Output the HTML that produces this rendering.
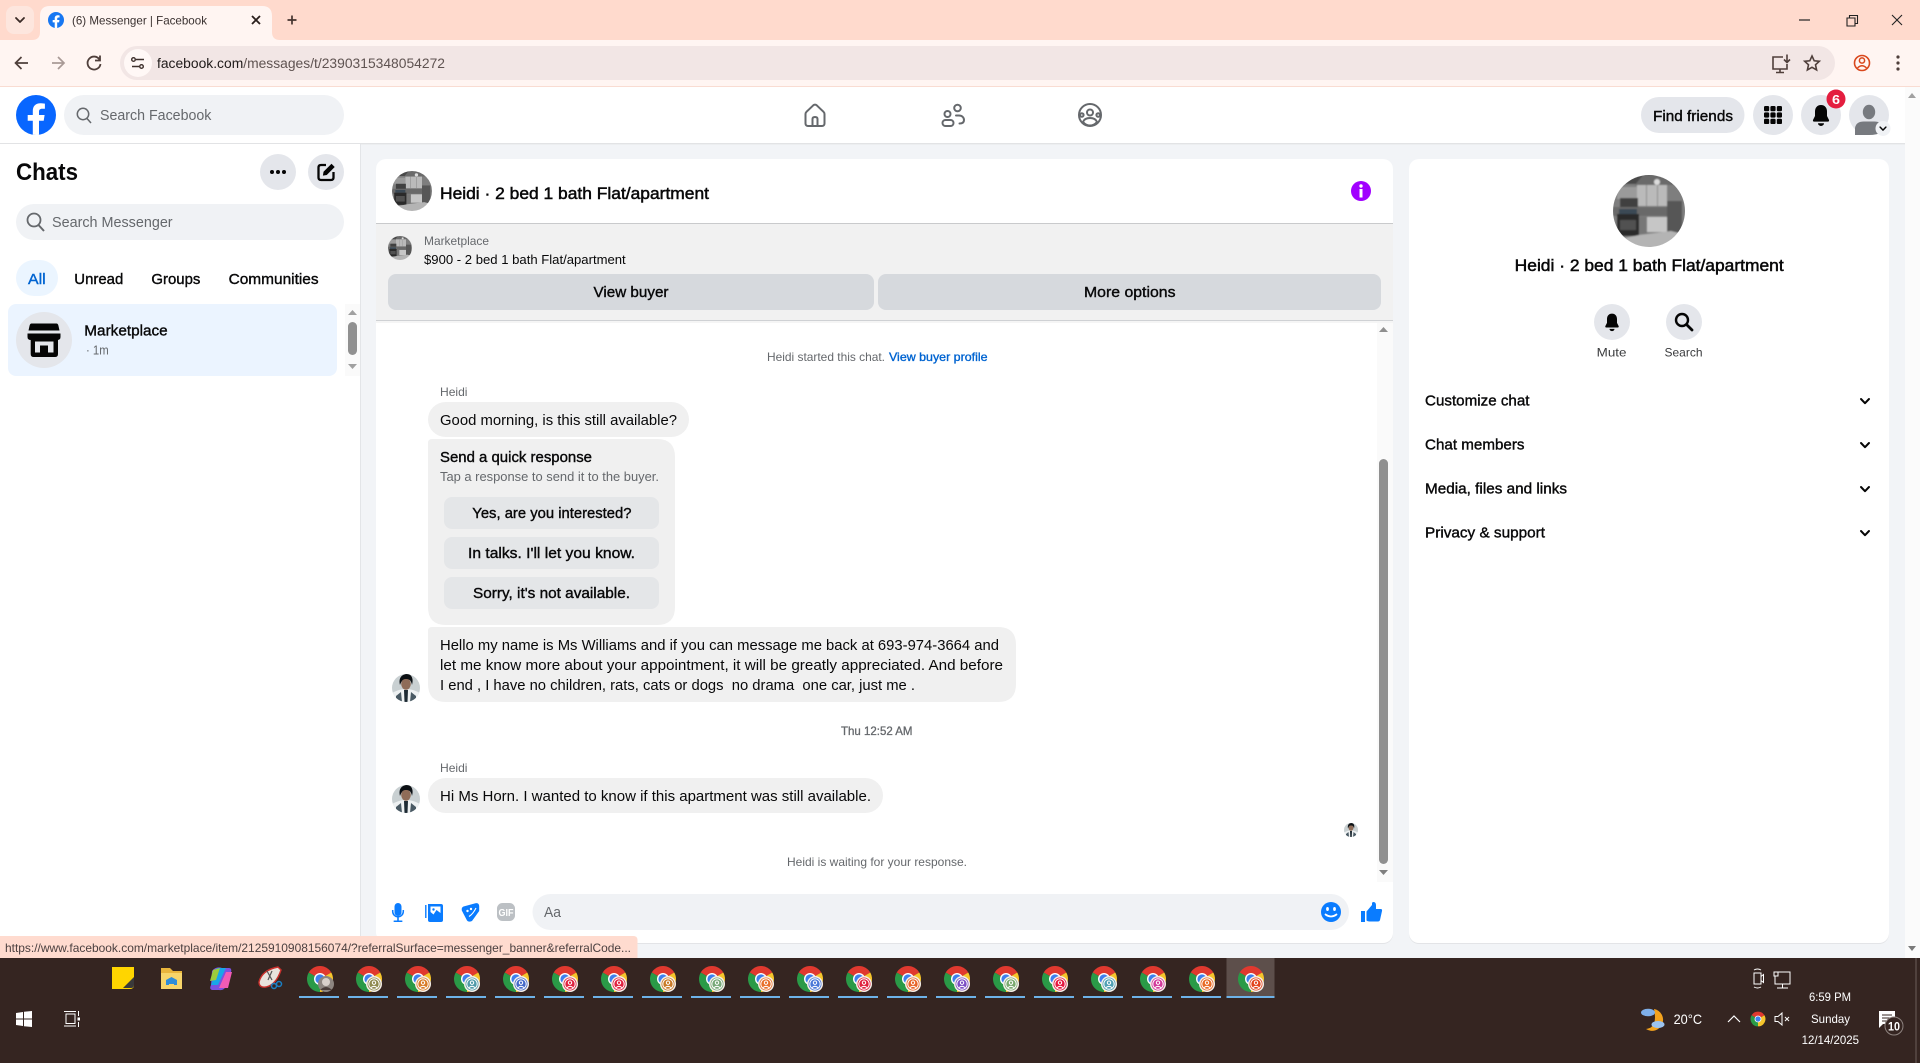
<!DOCTYPE html>
<html lang="en"><head><meta charset="utf-8"><title>(6) Messenger | Facebook</title>
<style>
html,body{margin:0;padding:0;width:1920px;height:1063px;overflow:hidden;background:#f2f4f7}
svg{display:block}
text{font-family:"Liberation Sans",sans-serif;white-space:pre;fill:#080809;font-size:15px}
.m{stroke:#080809;stroke-width:.38px}
.g{fill:#65686c}
.w{fill:#fff}
.s12{font-size:12px}.s13{font-size:13px}
.ic{fill:none;stroke:#65686c;stroke-width:2;stroke-linecap:round;stroke-linejoin:round}
</style></head><body>
<svg width="1920" height="1063" viewBox="0 0 1920 1063" xmlns="http://www.w3.org/2000/svg">
<defs>
<clipPath id="c72"><circle cx="36" cy="36" r="36"/></clipPath>
<filter id="soft" x="-5%" y="-5%" width="110%" height="110%"><feGaussianBlur stdDeviation=".7"/></filter>
<symbol id="kitchen" viewBox="0 0 72 72"><g clip-path="url(#c72)"><g filter="url(#soft)">
<rect x="-2" y="-2" width="76" height="76" fill="#7e7e7e"/>
<rect x="-2" y="-2" width="76" height="11" fill="#4a4a4a"/>
<polygon points="30,0 52,0 60,10 22,10" fill="#6b6b6b"/>
<circle cx="44" cy="7" r="3" fill="#dcdcdc"/>
<rect x="24" y="10" width="30" height="21" fill="#bababa"/>
<rect x="33" y="10" width="1" height="21" fill="#8c8c8c"/><rect x="44" y="10" width="1" height="21" fill="#8c8c8c"/>
<rect x="4" y="12" width="20" height="12" fill="#9b9b9b"/>
<rect x="7" y="23" width="18" height="10" fill="#404040"/>
<rect x="0" y="32" width="56" height="9" fill="#696969"/>
<rect x="6" y="34" width="18" height="5" fill="#3a4854"/>
<rect x="4" y="39" width="22" height="22" fill="#2a2a2a"/>
<rect x="7" y="45" width="16" height="10" fill="#515151"/>
<rect x="26" y="42" width="8" height="17" fill="#777"/>
<rect x="34" y="42" width="20" height="15" fill="#c6c6c6"/>
<rect x="54" y="26" width="15" height="32" fill="#565656"/>
<polygon points="-2,66 26,60 58,56 74,60 74,74 -2,74" fill="#b4b4b4"/>
</g></g></symbol>
<clipPath id="c28"><circle cx="14" cy="14" r="14"/></clipPath>
<symbol id="person" viewBox="0 0 28 28"><g clip-path="url(#c28)">
<rect width="28" height="28" fill="#c9d0d2"/>
<path d="M0 28V19C4 17 8 15 14 15S24 17 28 19V28Z" fill="#eef1f2"/>
<path d="M12 16H16L15.500 28H12.500Z" fill="#1d2a33"/>
<path d="M4 28V22L9 18 10 28ZM24 28V22L19 18 18 28Z" fill="#4a5a64"/>
<ellipse cx="14" cy="10" rx="4.800" ry="5.800" fill="#8f6c58"/>
<path d="M8 11C6 3 11 0 15 0S22 4 20 11C19 6 17 5 14 5S10 6 8 11Z" fill="#0c1014"/>
</g></symbol>
<symbol id="fbf" viewBox="0 0 40 40"><path d="M27.7 25.8L28.6 20H23V16.6C23 14.9 23.9 13.7 26.2 13.7H28.9V8.6S26.6 8.2 24.4 8.2C19.8 8.2 16.8 11 16.8 15.7V20H11.7V25.8H16.8V39.6C18 39.9 19 40 20 40S22 39.9 23 39.7V25.8Z" fill="#fff"/></symbol>
<symbol id="chrome" viewBox="-14 -14 28 28" overflow="visible">
<path d="M0 0L-11.26-6.5A13 13 0 0 1 11.26-6.5Z" fill="#e0392f"/>
<path d="M0 0L11.26-6.5A13 13 0 0 1 0 13Z" fill="#f6c52c"/>
<path d="M0 0L0 13A13 13 0 0 1-11.26-6.5Z" fill="#2a9a47"/>
<circle r="6" fill="#fff"/><circle r="4.6" fill="#3f80ee"/>
</symbol>
<symbol id="badge" viewBox="-9 -9 18 18">
<circle r="8" fill="#f6efe8"/><circle r="6.5" fill="currentColor"/><circle r="5.2" fill="none" stroke="#fff" stroke-width="1"/>
<circle cy="-1.3" r="1.7" fill="none" stroke="#fff" stroke-width="1"/><path d="M-3 3.6Q0 1 3 3.6" fill="none" stroke="#fff" stroke-width="1"/>
</symbol>
<symbol id="bell" viewBox="0 0 24 24"><path d="M12 2C8 2 6 5 6 8.5V13L4 17C3.7 18 4.2 18.6 5 18.6H19C19.8 18.6 20.3 18 20 17L18 13V8.5C18 5 16 2 12 2ZM9 20.2A3 2.8 0 0 0 15 20.2Z" fill="#050505"/></symbol>
<symbol id="chev" viewBox="0 0 14 14"><path d="M3 5L7 9.2 11 5" fill="none" stroke="#050505" stroke-width="2" stroke-linecap="round" stroke-linejoin="round"/></symbol>
</defs>

<!-- browser chrome -->
<rect width="1920" height="87" fill="#ffdacd"/>
<rect x="6" y="6" width="28" height="28" rx="8" fill="#fde6de"/>
<path d="M16 18L20 22 24 18" fill="none" stroke="#3a2a26" stroke-width="1.8" stroke-linecap="round" stroke-linejoin="round"/>
<path d="M0 40H1920V86H0Z" fill="#fff5f2"/>
<path d="M32 40Q40 40 40 32V16Q40 6 50 6H262Q272 6 272 16V32Q272 40 280 40Z" fill="#fff5f2"/>
<circle cx="56" cy="20" r="8" fill="#1877f2"/><use href="#fbf" x="48" y="12" width="16" height="16"/>
<text x="72" y="24.5" class="s12" style="fill:#3a3130" textLength="135" lengthAdjust="spacingAndGlyphs">(6) Messenger | Facebook</text>
<path d="M252 16L260 24M260 16L252 24" stroke="#2a1f1c" stroke-width="1.8"/>
<path d="M292 15.5V24.5M287.5 20H296.5" stroke="#45342f" stroke-width="1.7"/>
<path d="M1799 20H1810" stroke="#222" stroke-width="1.2"/>
<path d="M1847 18H1855V26H1847ZM1849.5 18V15.5H1857.5V23.5H1855" fill="none" stroke="#222" stroke-width="1.1"/>
<path d="M1892 15L1902 25M1902 15L1892 25" stroke="#222" stroke-width="1.1"/>
<rect x="0" y="86" width="1920" height="1" fill="#f9dcd2"/>
<path d="M15.5 63H28M21.5 57L15.5 63 21.5 69" fill="none" stroke="#4f3f3b" stroke-width="1.7"/>
<path d="M64 63H52M58 57L64 63 58 69" fill="none" stroke="#a99a96" stroke-width="1.7"/>
<path d="M99.5 59.5A6.5 6.5 0 1 0 100.5 64M100 55.5V60.5H95" fill="none" stroke="#4f3f3b" stroke-width="1.8"/>
<rect x="120" y="46" width="1715" height="34" rx="17" fill="#f2e6e5"/>
<circle cx="138" cy="63" r="14" fill="#fff8f6"/>
<path d="M136 59.5H144M132 66.5H139" stroke="#3e302c" stroke-width="1.5"/><circle cx="133.5" cy="59.5" r="1.8" fill="none" stroke="#3e302c" stroke-width="1.4"/><circle cx="141.5" cy="66.5" r="1.8" fill="none" stroke="#3e302c" stroke-width="1.4"/>
<text x="157" y="68" style="font-size:13.5px;fill:#5f5351" textLength="288" lengthAdjust="spacingAndGlyphs"><tspan style="fill:#1f1a19">facebook.com</tspan>/messages/t/2390315348054272</text>
<path d="M1783 57H1773V69H1787V64M1776 72.5H1784M1780 69V72M1787 54.5V62M1784 59.5L1787 62.5 1790 59.5" fill="none" stroke="#4f3f3b" stroke-width="1.6"/>
<path d="M1812 56L1814.2 60.8 1819.3 61.3 1815.5 64.8 1816.6 69.9 1812 67.3 1807.4 69.9 1808.5 64.8 1804.7 61.3 1809.8 60.8Z" fill="none" stroke="#4f3f3b" stroke-width="1.6"/>
<circle cx="1862" cy="63" r="7.5" fill="none" stroke="#d9471c" stroke-width="1.6"/><circle cx="1862" cy="60.5" r="2.6" fill="none" stroke="#d9471c" stroke-width="1.5"/><path d="M1857.5 68Q1862 63.5 1866.5 68" fill="none" stroke="#d9471c" stroke-width="1.5"/>
<circle cx="1898" cy="57" r="1.6" fill="#4f3f3b"/><circle cx="1898" cy="63" r="1.6" fill="#4f3f3b"/><circle cx="1898" cy="69" r="1.6" fill="#4f3f3b"/>

<!-- page -->
<rect x="0" y="87" width="1920" height="871" fill="#f2f4f7"/>
<rect x="1905" y="87" width="15" height="871" fill="#fbfbfb"/>
<path d="M1912 93L1916 98H1908Z" fill="#a0a0a0"/><path d="M1912 951L1908 946H1916Z" fill="#7a7a7a"/>

<!-- header -->
<rect x="0" y="87" width="1905" height="56" fill="#fff"/>
<rect x="0" y="143" width="1905" height="1" fill="#e2e3e5"/><rect x="0" y="144" width="1905" height="1" fill="#eceef0"/>
<circle cx="36" cy="115" r="20" fill="#0866ff"/><use href="#fbf" x="16" y="95" width="40" height="40"/>
<rect x="64" y="95" width="280" height="40" rx="20" fill="#f0f2f5"/>
<circle cx="83" cy="114" r="5.7" fill="none" stroke="#65686c" stroke-width="1.5"/><path d="M87 118.5L91 123" stroke="#65686c" stroke-width="1.5"/>
<text x="100" y="120" class="g" textLength="111.4" lengthAdjust="spacingAndGlyphs">Search Facebook</text>
<g transform="translate(803 103)" class="ic"><path d="M2.5 11C2.5 10 3 9.3 3.6 8.7L10.3 2.3C11.3 1.4 12.7 1.4 13.7 2.3L20.4 8.7C21 9.3 21.5 10 21.5 11V20.5C21.5 22 20.5 23 19 23H5C3.5 23 2.5 22 2.5 20.5ZM9.5 23V16C9.5 15 10.2 14 12 14S14.5 15 14.5 16V23"/></g>
<g transform="translate(941 103)" class="ic"><circle cx="6.5" cy="11" r="3"/><rect x="1.5" y="17" width="11" height="6" rx="3"/><circle cx="16.5" cy="5" r="3.3"/><path d="M15 12.5H18C21 12.5 23 14.5 23 17S21 20.5 18.5 20.5"/></g>
<g transform="translate(1078 103)" class="ic"><circle cx="12" cy="12" r="11"/><circle cx="12" cy="9.5" r="3"/><circle cx="3.8" cy="12" r="1.8"/><circle cx="20.2" cy="12" r="1.8"/><path d="M5 19Q6.5 15 12 15T19 19Q16 22.5 12 22.5T5 19Z"/></g>
<rect x="1641" y="97" width="103.500" height="36" rx="18" fill="#e4e6eb"/>
<text x="1653" y="121" class="m" textLength="80" lengthAdjust="spacingAndGlyphs">Find friends</text>
<circle cx="1773" cy="115" r="20" fill="#e4e6eb"/>
<g fill="#050505"><rect x="1764" y="106" width="5.200" height="5.200" rx="1.300"/><rect x="1770.400" y="106" width="5.200" height="5.200" rx="1.300"/><rect x="1776.800" y="106" width="5.200" height="5.200" rx="1.300"/><rect x="1764" y="112.400" width="5.200" height="5.200" rx="1.300"/><rect x="1770.400" y="112.400" width="5.200" height="5.200" rx="1.300"/><rect x="1776.800" y="112.400" width="5.200" height="5.200" rx="1.300"/><rect x="1764" y="118.800" width="5.200" height="5.200" rx="1.300"/><rect x="1770.400" y="118.800" width="5.200" height="5.200" rx="1.300"/><rect x="1776.800" y="118.800" width="5.200" height="5.200" rx="1.300"/></g>
<circle cx="1821" cy="115" r="20" fill="#e4e6eb"/><use href="#bell" x="1809" y="103" width="24" height="24"/>
<circle cx="1836" cy="99" r="9.500" fill="#e41e3f"/><text x="1832" y="104" class="w" style="font-size:13px;font-weight:bold" textLength="8" lengthAdjust="spacingAndGlyphs">6</text>
<circle cx="1869" cy="115" r="20" fill="#e4e6eb"/>
<ellipse cx="1869" cy="112" rx="6.200" ry="7.200" fill="#777a7f"/><path d="M1855 135V128Q1856 121.500 1864 121.500H1874Q1882 121.500 1883 128V132Q1877 135 1869 135Z" fill="#777a7f"/>
<circle cx="1883" cy="128.500" r="7.500" fill="#f0f2f5"/><use href="#chev" x="1878" y="123.500" width="10" height="10"/>

<!-- sidebar -->
<rect x="0" y="144" width="360" height="814" fill="#fff"/><rect x="360" y="144" width="1" height="814" fill="#e3e5e8"/>
<text x="16" y="180" style="font-size:24px;font-weight:bold" textLength="62" lengthAdjust="spacingAndGlyphs">Chats</text>
<circle cx="278" cy="172" r="18" fill="#e4e6eb"/><circle cx="272" cy="172" r="2" fill="#050505"/><circle cx="278" cy="172" r="2" fill="#050505"/><circle cx="284" cy="172" r="2" fill="#050505"/>
<circle cx="326" cy="172" r="18" fill="#e4e6eb"/>
<path d="M326 165H321Q318.500 165 318.500 167.500V177.500Q318.500 180 321 180H331Q333.500 180 333.500 177.500V172" fill="none" stroke="#050505" stroke-width="2.300"/><path d="M324 172L331.500 164.500 334 167 326.500 174.500 323.500 175Z" fill="#050505" stroke="#050505" stroke-width="1"/>
<rect x="16" y="204" width="328" height="36" rx="18" fill="#f0f2f5"/>
<circle cx="34" cy="220" r="6.500" fill="none" stroke="#65686c" stroke-width="1.800"/><path d="M38.500 225L44 231" stroke="#65686c" stroke-width="2"/>
<text x="52" y="227" class="g" textLength="120.600" lengthAdjust="spacingAndGlyphs">Search Messenger</text>
<rect x="16" y="260" width="42" height="36" rx="18" fill="#ebf5ff"/>
<text x="28" y="284" style="fill:#0064d1;stroke:#0064d1;stroke-width:.38px" textLength="17.700" lengthAdjust="spacingAndGlyphs">All</text>
<text x="74.300" y="284" class="m" textLength="49" lengthAdjust="spacingAndGlyphs">Unread</text>
<text x="151.400" y="284" class="m" textLength="49" lengthAdjust="spacingAndGlyphs">Groups</text>
<text x="228.600" y="284" class="m" textLength="90" lengthAdjust="spacingAndGlyphs">Communities</text>
<rect x="8" y="304" width="329" height="72" rx="8" fill="#ebf4ff"/>
<circle cx="44" cy="340" r="28" fill="#e4e6eb"/>
<path d="M31.500 323.500H56.500Q58 323.500 58.500 326L59.500 330.500H28.500L29.500 326Q30 323.500 31.500 323.500Z" fill="#050505"/>
<path d="M27.500 333.500H60.500V337Q60.500 340 57 340H31Q27.500 340 27.500 337Z" fill="#050505"/>
<path d="M30.700 339H58V354Q58 357 55 357H33.700Q30.700 357 30.700 354ZM35 341.500V352.500H40V345.500H48V352.500H53.500V341.500Z" fill="#050505" fill-rule="evenodd"/>
<text x="84.300" y="335.500" class="m" textLength="83.400" lengthAdjust="spacingAndGlyphs">Marketplace</text>
<text x="86" y="354.500" class="g s13" textLength="22.700" lengthAdjust="spacingAndGlyphs">· 1m</text>
<rect x="345" y="304" width="15" height="72" fill="#fafafa"/>
<rect x="348" y="322" width="9" height="33" rx="4.500" fill="#909090"/>
<path d="M352.500 310L357 315H348Z" fill="#a0a0a0"/><path d="M352.500 369L348 364H357Z" fill="#a0a0a0"/>

<!-- chat panel -->
<rect x="376" y="160" width="1017" height="784" rx="10" fill="#e3e4e7"/>
<rect x="376" y="159" width="1017" height="784" rx="10" fill="#fff"/>
<use href="#kitchen" x="392" y="171" width="40" height="40"/>
<text x="440" y="199" style="font-size:17px;stroke:#080809;stroke-width:.5px" textLength="269" lengthAdjust="spacingAndGlyphs">Heidi · 2 bed 1 bath Flat/apartment</text>
<circle cx="1361" cy="191" r="10" fill="#a100ff"/><circle cx="1361" cy="186" r="1.700" fill="#fff"/><rect x="1359.500" y="189" width="3" height="8.500" fill="#fff"/>
<rect x="376" y="223" width="1017" height="1" fill="#c9cacc"/>
<rect x="376" y="224" width="1017" height="96" fill="#f1f1f1"/>
<rect x="376" y="320" width="1017" height="1" fill="#cfd1d4"/><rect x="376" y="321" width="1017" height="2" fill="#f5f5f5"/>
<use href="#kitchen" x="388" y="236" width="24" height="24"/>
<text x="424" y="245" class="g s12" textLength="65" lengthAdjust="spacingAndGlyphs">Marketplace</text>
<text x="424" y="264" class="s13" textLength="201.700" lengthAdjust="spacingAndGlyphs">$900 - 2 bed 1 bath Flat/apartment</text>
<rect x="388" y="274" width="486" height="36" rx="8" fill="#d6d9dd"/>
<rect x="878" y="274" width="503" height="36" rx="8" fill="#d6d9dd"/>
<text x="593.500" y="297" class="m" textLength="75" lengthAdjust="spacingAndGlyphs">View buyer</text>
<text x="1084" y="297" class="m" textLength="91.500" lengthAdjust="spacingAndGlyphs">More options</text>

<rect x="1377" y="323" width="16" height="559" fill="#fafafa"/>
<path d="M1383.500 327L1388 332H1379Z" fill="#8f8f8f"/><path d="M1383.500 875L1379 870H1388Z" fill="#7f7f7f"/>
<rect x="1379" y="459" width="9" height="405" rx="4.500" fill="#909090"/>

<text x="767" y="361" class="g s12" textLength="118" lengthAdjust="spacingAndGlyphs">Heidi started this chat.</text>
<text x="889" y="361" class="s12" style="fill:#0064d1;stroke:#0064d1;stroke-width:.35px" textLength="98.500" lengthAdjust="spacingAndGlyphs">View buyer profile</text>
<text x="440" y="396" class="g s12" textLength="27.500" lengthAdjust="spacingAndGlyphs">Heidi</text>
<rect x="428" y="402" width="261" height="35" rx="17.500" fill="#f0f0f0"/>
<text x="440" y="425" textLength="237" lengthAdjust="spacingAndGlyphs">Good morning, is this still available?</text>
<path d="M432 439H657Q675 439 675 457V607Q675 625 657 625H446Q428 625 428 607V443Q428 439 432 439Z" fill="#f0f0f0"/>
<text x="440" y="462" class="m" textLength="152" lengthAdjust="spacingAndGlyphs">Send a quick response</text>
<text x="440" y="481" class="g s13" textLength="219" lengthAdjust="spacingAndGlyphs">Tap a response to send it to the buyer.</text>
<rect x="444" y="497" width="215" height="32" rx="8" fill="#e4e6e8"/>
<rect x="444" y="537" width="215" height="32" rx="8" fill="#e4e6e8"/>
<rect x="444" y="577" width="215" height="32" rx="8" fill="#e4e6e8"/>
<text x="472.300" y="518" class="m" textLength="159.200" lengthAdjust="spacingAndGlyphs">Yes, are you interested?</text>
<text x="468" y="558" class="m" textLength="167" lengthAdjust="spacingAndGlyphs">In talks. I'll let you know.</text>
<text x="473" y="598" class="m" textLength="157" lengthAdjust="spacingAndGlyphs">Sorry, it's not available.</text>
<path d="M432 627H998Q1016 627 1016 645V684Q1016 702 998 702H446Q428 702 428 684V631Q428 627 432 627Z" fill="#f0f0f0"/>
<text x="440" y="650" textLength="559" lengthAdjust="spacingAndGlyphs">Hello my name is Ms Williams and if you can message me back at 693-974-3664 and</text>
<text x="440" y="670" textLength="563" lengthAdjust="spacingAndGlyphs">let me know more about your appointment, it will be greatly appreciated. And before</text>
<text x="440" y="690" textLength="475" lengthAdjust="spacingAndGlyphs">I end , I have no children, rats, cats or dogs  no drama  one car, just me .</text>
<use href="#person" x="392" y="674" width="28" height="28"/>
<text x="841" y="735" class="g s12" style="stroke:#65686c;stroke-width:.3px" textLength="71.500" lengthAdjust="spacingAndGlyphs">Thu 12:52 AM</text>
<text x="440" y="772" class="g s12" textLength="27.500" lengthAdjust="spacingAndGlyphs">Heidi</text>
<rect x="428" y="778" width="455" height="35" rx="17.500" fill="#f0f0f0"/>
<text x="440" y="801" textLength="431" lengthAdjust="spacingAndGlyphs">Hi Ms Horn. I wanted to know if this apartment was still available.</text>
<use href="#person" x="392" y="785" width="28" height="28"/>
<use href="#person" x="1344" y="823" width="14" height="14"/>
<text x="787" y="866" class="g s12" textLength="180" lengthAdjust="spacingAndGlyphs">Heidi is waiting for your response.</text>

<!-- composer -->
<g fill="#0a7cff">
<rect x="394.500" y="903" width="7" height="13" rx="3.500"/>
<path d="M392.700 910V911.500A5.300 5.300 0 0 0 403.300 911.500V910" fill="none" stroke="#0a7cff" stroke-width="1.500"/>
<rect x="397.200" y="917" width="1.600" height="4"/><rect x="393.500" y="920.500" width="9" height="1.500" rx=".7"/>
<path d="M428 904H441Q443 904 443 906V920Q443 922 441 922H430Q428 922 428 920Z"/>
<path d="M425.800 905V918" stroke="#0a7cff" stroke-width="1.400"/>
<path d="M430.500 906.500H440.500V913L436.500 910 433.500 914.500 430.500 912Z" fill="#fff"/><circle cx="433.500" cy="909.500" r="1.200" fill="#0a7cff"/>
<path d="M463.500 906.500L475.500 903.200Q479 902.800 479.200 906V911L472 921Q468.500 922.500 467 920.500L461.800 910.500Q461.200 907.500 463.500 906.500Z"/>
<circle cx="467.500" cy="911" r="1.200" fill="#fff"/><circle cx="471" cy="909" r="1.200" fill="#fff"/><path d="M469 916.500Q473 914 476 908" fill="none" stroke="#fff" stroke-width="1.100"/>
</g>
<rect x="497" y="903" width="18" height="18" rx="5.500" fill="#bcc0c4"/>
<text x="498.500" y="916" class="w" style="font-size:10px;font-weight:bold" textLength="15" lengthAdjust="spacingAndGlyphs">GIF</text>
<rect x="532.500" y="894" width="816.500" height="36" rx="18" fill="#f0f2f5"/>
<text x="544" y="917" style="fill:#65686c" textLength="17" lengthAdjust="spacingAndGlyphs">Aa</text>
<circle cx="1331" cy="912" r="10" fill="#0a7cff"/>
<ellipse cx="1327.500" cy="909" rx="1.400" ry="2" fill="#fff"/><ellipse cx="1334.500" cy="909" rx="1.400" ry="2" fill="#fff"/>
<path d="M1325.500 914.500Q1331 918.500 1336.500 914.500" fill="none" stroke="#fff" stroke-width="1.800" stroke-linecap="round"/>
<path d="M1361 911H1365V922H1361ZM1366.500 911.500L1372 905V903.500Q1372 902 1373.500 902Q1376 902 1376 905.500V909H1380.500Q1382.500 909 1382 911L1380 920Q1379.500 921.500 1378 921.500H1369.500Q1367.500 921.500 1366.500 920.500Z" fill="#0a7cff"/>

<!-- right panel -->
<rect x="1409" y="160" width="480" height="784" rx="10" fill="#e3e4e7"/>
<rect x="1409" y="159" width="480" height="784" rx="10" fill="#fff"/>
<use href="#kitchen" x="1613" y="175" width="72" height="72"/>
<text x="1514.700" y="271" style="font-size:17px;stroke:#080809;stroke-width:.5px" textLength="269" lengthAdjust="spacingAndGlyphs">Heidi · 2 bed 1 bath Flat/apartment</text>
<circle cx="1612" cy="322" r="18" fill="#e4e6eb"/><use href="#bell" x="1602" y="312" width="20" height="20"/>
<circle cx="1684" cy="322" r="18" fill="#e4e6eb"/><circle cx="1682" cy="320" r="6" fill="none" stroke="#050505" stroke-width="2.400"/><path d="M1686.500 324.500L1692 330" stroke="#050505" stroke-width="2.800" stroke-linecap="round"/>
<text x="1596.700" y="356.500" class="s12" style="fill:#3a3b3d" textLength="29.800" lengthAdjust="spacingAndGlyphs">Mute</text>
<text x="1664.500" y="356.500" class="s12" style="fill:#3a3b3d" textLength="38" lengthAdjust="spacingAndGlyphs">Search</text>
<text x="1425" y="405.500" class="m" textLength="104.500" lengthAdjust="spacingAndGlyphs">Customize chat</text>
<text x="1425" y="449.500" class="m" textLength="99.500" lengthAdjust="spacingAndGlyphs">Chat members</text>
<text x="1425" y="493.500" class="m" textLength="142" lengthAdjust="spacingAndGlyphs">Media, files and links</text>
<text x="1425" y="537.500" class="m" textLength="120" lengthAdjust="spacingAndGlyphs">Privacy &amp; support</text>
<use href="#chev" x="1858" y="394" width="14" height="14"/>
<use href="#chev" x="1858" y="438" width="14" height="14"/>
<use href="#chev" x="1858" y="482" width="14" height="14"/>
<use href="#chev" x="1858" y="526" width="14" height="14"/>

<!-- status bubble -->
<path d="M0 936H633Q637.500 936 637.500 940V958H0Z" fill="#ffdbcf"/>
<text x="5" y="952" class="s12" style="fill:#4b4040" textLength="626" lengthAdjust="spacingAndGlyphs">https://www.facebook.com/marketplace/item/2125910908156074/?referralSurface=messenger_banner&amp;referralCode...</text>

<!-- taskbar -->
<rect x="0" y="958" width="1920" height="105" fill="#352521"/>
<rect x="1226.500" y="958" width="48" height="38" fill="#5d4f4b"/>
<rect x="1915.500" y="958" width="1" height="105" fill="#6a5d59"/>
<path d="M112 967H134V985Q134 989 130 989H112Z" fill="#ffd500"/><path d="M123 988L134 977V985Q134 988 131 988Z" fill="#3a3a3a"/>
<path d="M161 968H170L173 971H182V989H161Z" fill="#e9b53c"/><path d="M161 973H182V989H161Z" fill="#f7d56a"/><path d="M166 985H177V980L171.500 977 166 980Z" fill="#2f8dd9"/><rect x="169" y="984" width="5" height="5" fill="#f7d56a"/>
<path d="M212 971Q216 966 222 968L229 968Q232 968 231 972L226 986Q224 991 219 990L212 990Q209 989 211 985Z" fill="#7a52e0"/><path d="M217 968H226L218 985H211Z" fill="#18a7e8"/><path d="M226 972H232L228 988H219Z" fill="#f15bb5"/><path d="M213 970L220 968 216 980 210 981Z" fill="#9ccc3c"/>
<path d="M259 982Q262 970 278 967L281 970Q276 985 266 987Q259 988 259 982Z" fill="#e8e3dd" stroke="#c9302c" stroke-width="1.400"/><path d="M267 971L272 980M272 971L268 980" stroke="#555" stroke-width="1.200"/><circle cx="274" cy="986" r="2.500" fill="none" stroke="#1a7fc4" stroke-width="1.500"/><circle cx="279" cy="984" r="2.500" fill="none" stroke="#1a7fc4" stroke-width="1.500"/>

<g id="tb">
<use href="#chrome" x="306" y="965" width="28" height="28"/><circle cx="326" cy="984" r="8" fill="#8d8580"/><circle cx="326" cy="982" r="4" fill="#d8d0cb"/><path d="M320 990Q326 984 332 990Z" fill="#4a3d3a"/>
<use href="#chrome" x="355" y="965" width="28" height="28"/><use href="#badge" x="365" y="975" width="18" height="18" style="color:#8f8a4f"/>
<use href="#chrome" x="404" y="965" width="28" height="28"/><use href="#badge" x="414" y="975" width="18" height="18" style="color:#d97b27"/>
<use href="#chrome" x="453" y="965" width="28" height="28"/><use href="#badge" x="463" y="975" width="18" height="18" style="color:#4f9aa8"/>
<use href="#chrome" x="502" y="965" width="28" height="28"/><use href="#badge" x="512" y="975" width="18" height="18" style="color:#4469c9"/>
<use href="#chrome" x="551" y="965" width="28" height="28"/><use href="#badge" x="561" y="975" width="18" height="18" style="color:#e0223f"/>
<use href="#chrome" x="600" y="965" width="28" height="28"/><use href="#badge" x="610" y="975" width="18" height="18" style="color:#e0223f"/>
<use href="#chrome" x="649" y="965" width="28" height="28"/><use href="#badge" x="659" y="975" width="18" height="18" style="color:#c97a26"/>
<use href="#chrome" x="698" y="965" width="28" height="28"/><use href="#badge" x="708" y="975" width="18" height="18" style="color:#78a878"/>
<use href="#chrome" x="747" y="965" width="28" height="28"/><use href="#badge" x="757" y="975" width="18" height="18" style="color:#e8702a"/>
<use href="#chrome" x="796" y="965" width="28" height="28"/><use href="#badge" x="806" y="975" width="18" height="18" style="color:#4a78d8"/>
<use href="#chrome" x="845" y="965" width="28" height="28"/><use href="#badge" x="855" y="975" width="18" height="18" style="color:#e0223f"/>
<use href="#chrome" x="894" y="965" width="28" height="28"/><use href="#badge" x="904" y="975" width="18" height="18" style="color:#e8642a"/>
<use href="#chrome" x="943" y="965" width="28" height="28"/><use href="#badge" x="953" y="975" width="18" height="18" style="color:#7c4fc4"/>
<use href="#chrome" x="992" y="965" width="28" height="28"/><use href="#badge" x="1002" y="975" width="18" height="18" style="color:#7aaa6e"/>
<use href="#chrome" x="1041" y="965" width="28" height="28"/><use href="#badge" x="1051" y="975" width="18" height="18" style="color:#e6173f"/>
<use href="#chrome" x="1090" y="965" width="28" height="28"/><use href="#badge" x="1100" y="975" width="18" height="18" style="color:#4fa0b4"/>
<use href="#chrome" x="1139" y="965" width="28" height="28"/><use href="#badge" x="1149" y="975" width="18" height="18" style="color:#d23a9a"/>
<use href="#chrome" x="1188" y="965" width="28" height="28"/><use href="#badge" x="1198" y="975" width="18" height="18" style="color:#e86a24"/>
<use href="#chrome" x="1237" y="965" width="28" height="28"/><use href="#badge" x="1247" y="975" width="18" height="18" style="color:#e2441c"/>
</g>
<g fill="#6db2e8">
<rect x="299" y="996" width="40" height="2"/><rect x="348" y="996" width="40" height="2"/><rect x="397" y="996" width="40" height="2"/><rect x="446" y="996" width="40" height="2"/><rect x="495" y="996" width="40" height="2"/><rect x="544" y="996" width="40" height="2"/><rect x="593" y="996" width="40" height="2"/><rect x="642" y="996" width="40" height="2"/><rect x="691" y="996" width="40" height="2"/><rect x="740" y="996" width="40" height="2"/><rect x="789" y="996" width="40" height="2"/><rect x="838" y="996" width="40" height="2"/><rect x="887" y="996" width="40" height="2"/><rect x="936" y="996" width="40" height="2"/><rect x="985" y="996" width="40" height="2"/><rect x="1034" y="996" width="40" height="2"/><rect x="1083" y="996" width="40" height="2"/><rect x="1132" y="996" width="40" height="2"/><rect x="1181" y="996" width="40" height="2"/><rect x="1226.500" y="996" width="48" height="2"/>
</g>
<path d="M16 1013L23 1012V1018.500H16ZM24 1011.800L32 1011V1018.500H24ZM16 1019.500H23V1026L16 1025ZM24 1019.500H32V1027L24 1026.200Z" fill="#fff"/>
<path d="M66 1014H75V1023.500H66ZM64 1011.500H76M64 1026H76M78.500 1011V1016M78.500 1022V1027" fill="none" stroke="#fff" stroke-width="1"/><rect x="77.500" y="1017.500" width="2.500" height="3" fill="#fff"/>

<path d="M1754 973H1761V984H1754ZM1761 976.500L1763.500 974.500V982.500L1761 980.500M1754 970Q1757.500 968 1761 970M1754 987Q1757.500 989 1761 987" fill="none" stroke="#fff" stroke-width="1"/>
<path d="M1775 972H1790V984H1775V976M1782.500 984V988M1777 988H1788" fill="none" stroke="#fff" stroke-width="1"/><rect x="1774" y="972" width="4" height="4" fill="#352521" stroke="#fff" stroke-width="1"/>
<text x="1809" y="1001" class="w s12" textLength="42" lengthAdjust="spacingAndGlyphs">6:59 PM</text>
<text x="1811" y="1023" class="w s12" textLength="39" lengthAdjust="spacingAndGlyphs">Sunday</text>
<text x="1801.600" y="1044" class="w s12" textLength="57.400" lengthAdjust="spacingAndGlyphs">12/14/2025</text>
<path d="M1654 1009A11 11 0 1 1 1646 1029Q1658 1028 1654 1009Z" fill="#f3a31e"/>
<ellipse cx="1648" cy="1012.500" rx="7" ry="3.800" fill="#7fb0ea"/><ellipse cx="1658" cy="1024.500" rx="6.500" ry="3.500" fill="#9cc4f0"/>
<text x="1673.600" y="1024" class="w" style="font-size:14px" textLength="28.400" lengthAdjust="spacingAndGlyphs">20°C</text>
<path d="M1728 1022L1734 1016 1740 1022" fill="none" stroke="#fff" stroke-width="1.200"/>
<use href="#chrome" x="1750" y="1011" width="16" height="16"/>
<path d="M1775 1016.500H1778L1782 1013V1025L1778 1021.500H1775ZM1785 1017L1789 1021M1789 1017L1785 1021" fill="none" stroke="#fff" stroke-width="1"/>
<path d="M1879 1011H1895V1024H1883L1879 1028Z" fill="#fff"/><path d="M1882 1015H1892M1882 1018H1892M1882 1021H1892" stroke="#352521" stroke-width="1"/>
<circle cx="1894" cy="1026" r="9" fill="#352521" stroke="#8d827e" stroke-width="1"/>
<text x="1888" y="1030.500" class="w" style="font-size:12px;font-weight:bold" textLength="12" lengthAdjust="spacingAndGlyphs">10</text>
</svg>
</body></html>
